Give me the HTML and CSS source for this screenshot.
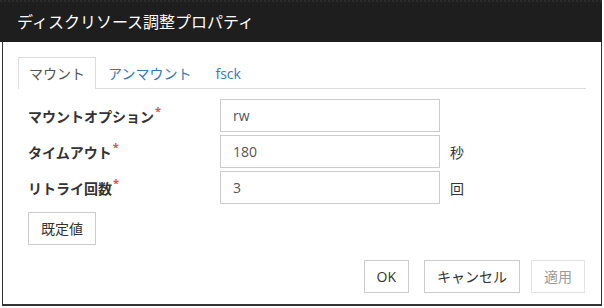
FILE: index.html
```html
<!DOCTYPE html>
<html lang="ja">
<head>
<meta charset="utf-8">
<link rel="stylesheet" href="styles.css">
</head>
<body>
<div class="dialog">
  <div class="header">ディスクリソース調整プロパティ</div>
  <div class="body">
    <ul class="tabs">
      <li class="tab active">マウント</li>
      <li class="tab">アンマウント</li>
      <li class="tab">fsck</li>
    </ul>
    <div class="form">
      <div class="row">
        <label class="label">マウントオプション<span class="req">*</span></label>
        <div class="input">rw</div>
      </div>
      <div class="row">
        <label class="label">タイムアウト<span class="req">*</span></label>
        <div class="input">180</div>
        <span class="unit">秒</span>
      </div>
      <div class="row">
        <label class="label">リトライ回数<span class="req">*</span></label>
        <div class="input">3</div>
        <span class="unit">回</span>
      </div>
      <div class="btn default-btn">既定値</div>
    </div>
    <div class="footer">
      <div class="btn ok">OK</div>
      <div class="btn cancel">キャンセル</div>
      <div class="btn disabled">適用</div>
    </div>
  </div>
</div>
</body>
</html>
```

FILE: styles.css
```css
html, body {
  margin: 0;
  padding: 0;
  background: #ffffff;
}
body {
  font-family: "Open Sans", "Noto Sans CJK JP", sans-serif;
  font-size: 14px;
  color: #333333;
}
.dialog {
  width: 602px;
  height: 306px;
  display: flex;
  flex-direction: column;
}
.header {
  height: 42px;
  background: #1e1e1e;
  border-top: 2px dotted #2c2c2c;
  box-sizing: border-box;
  color: #ffffff;
  font-size: 16px;
  line-height: 40px;
  padding-left: 17px;
}
.body {
  flex: 1;
  margin-left: 2px;
  border-left: 1px solid #333333;
  border-right: 1px solid #333333;
  border-bottom: 2px solid #333333;
  padding: 15px 15px 0 15px;
  display: flex;
  flex-direction: column;
}
.tabs {
  list-style: none;
  margin: 0;
  padding: 0;
  display: flex;
  border-bottom: 1px solid #dddddd;
  height: 31px;
}
.tab {
  padding: 0 11px;
  line-height: 31px;
  color: #337ab7;
  border: 1px solid transparent;
  border-bottom: none;
  margin-bottom: -1px;
}
.tab.active {
  color: #555555;
  border-color: #dddddd;
  background: #ffffff;
  height: 32px;
  box-sizing: border-box;
  padding: 0 10px;
}
.form {
  padding: 10px 0 0 10px;
  display: flex;
  flex-direction: column;
  gap: 3px;
}
.row {
  display: flex;
  align-items: center;
  height: 33px;
}
.label {
  width: 192px;
  font-weight: bold;
  color: #333333;
}
.req {
  color: #d9534f;
  font-size: 11px;
  vertical-align: top;
  position: relative;
  top: -3px;
  margin-left: 1px;
}
.input {
  width: 220px;
  height: 33px;
  box-sizing: border-box;
  border: 1px solid #cccccc;
  padding: 0 12px;
  line-height: 31px;
  color: #555555;
}
.unit {
  margin-left: 10px;
  color: #333333;
}
.btn {
  box-sizing: border-box;
  height: 33px;
  border: 1px solid #cccccc;
  padding: 0 12px;
  line-height: 31px;
  color: #333333;
  background: #ffffff;
}
.default-btn {
  align-self: flex-start;
  margin-top: 5px;
}
.footer {
  display: flex;
  justify-content: flex-end;
  margin-top: 15px;
  padding-right: 1px;
}
.cancel {
  margin-left: 15px;
}
.disabled {
  margin-left: 11px;
  border-color: #e3e3e3;
  color: #9a9a9a;
}
```
